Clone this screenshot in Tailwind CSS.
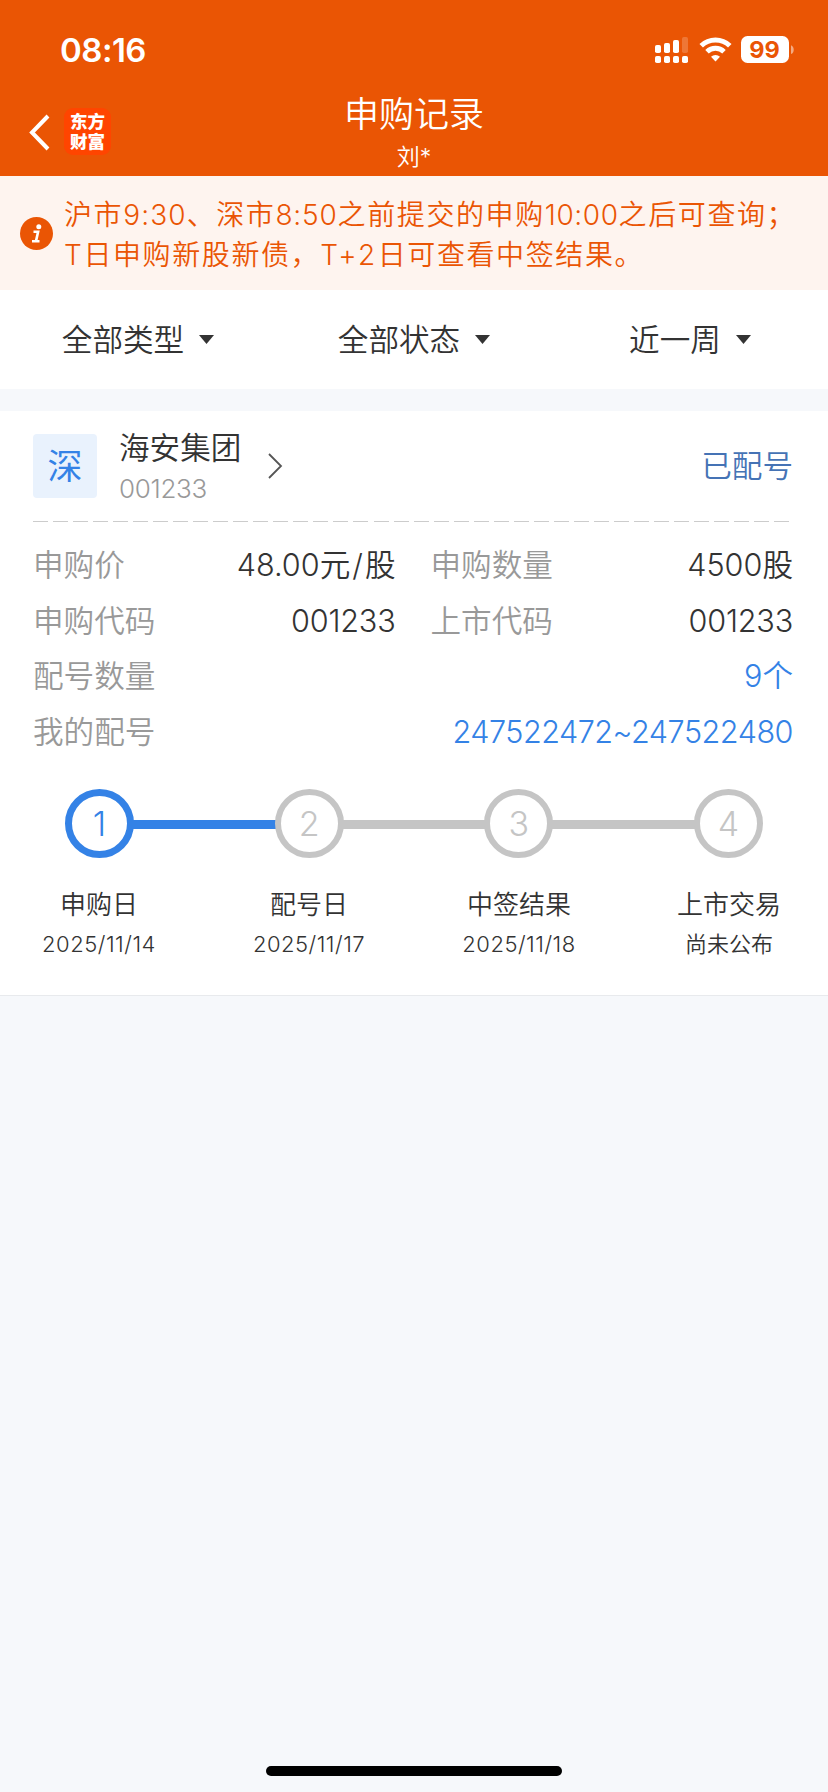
<!DOCTYPE html>
<html lang="zh-CN">
<head>
  <meta charset="UTF-8">
  <meta name="viewport" content="width=device-width, initial-scale=1.0">
  <title>申购记录</title>
  <script src="https://cdn.jsdelivr.net/npm/@tailwindcss/browser@4"></script>
</head>
<body class="bg-[#f6f8fb] font-['Inter','Noto_Sans_CJK_SC',sans-serif] text-[#333] font-[350]">
  <div class="w-[828px] h-[1792px] flex flex-col overflow-hidden">

    <!-- Header -->
    <header class="h-[176px] shrink-0 bg-[#ea5504] text-white">
      <div class="h-[98px] pl-[60px] pr-[34px] flex items-center justify-between">
        <span class="text-[33px] leading-[40px] font-semibold tracking-[-0.5px] pt-[2px]">08:16</span>
        <svg class="w-[140px] h-[30px]" viewBox="0 0 140 30" fill="#fff">
          <rect x="1" y="11" width="6" height="8" rx="1.8"/>
          <rect x="10" y="9" width="6" height="10" rx="1.8"/>
          <rect x="19" y="6" width="6" height="13" rx="1.8"/>
          <rect x="28" y="3" width="6" height="16" rx="1.8" opacity=".2"/>
          <rect x="1" y="22" width="6" height="7" rx="1.8"/>
          <rect x="10" y="22" width="6" height="7" rx="1.8"/>
          <rect x="19" y="22" width="6" height="7" rx="1.8"/>
          <rect x="28" y="22" width="6" height="7" rx="1.8"/>
          <g fill="none" stroke="#fff" stroke-width="5">
            <path d="M47.200 11.800a20.500 20.500 0 0 1 28.600 0"/>
            <path d="M53 17.700a12.200 12.200 0 0 1 17 0"/>
          </g>
          <path d="M57 22.800a6.500 6.500 0 0 1 9 0L61.500 27.500z"/>
          <rect x="87" y="2" width="48" height="27" rx="6.5"/>
          <path d="M137 11.300c3.600 1.200 3.600 7.600 0 8.800z" opacity=".5"/>
          <text x="110.500" y="24" text-anchor="middle" font-family="Inter" font-size="23.500" font-weight="700" fill="#ea5504">99</text>
        </svg>
      </div>
      <div class="h-[78px] grid grid-cols-[1fr_auto_1fr]">
        <div class="flex items-start pl-[28px] pt-[10px]">
          <svg class="w-[22px] h-[47px] mr-[14px]" viewBox="0 0 22 47" fill="none" stroke="#fff" stroke-width="4">
            <path d="M20 8L4 24.500L20 41"/>
          </svg>
          <div class="w-[47px] h-[47px] rounded-[9px] bg-[#ff4500] pt-[4px] text-center text-[17.5px] leading-[20px] font-black">东方<br>财富</div>
        </div>
        <div class="text-center -mt-[2px]">
          <h1 class="text-[35px] leading-[36px] font-[350]">申购记录</h1>
          <p class="text-[23px] leading-[28px] pt-[11px]">刘*</p>
        </div>
      </div>
    </header>

    <!-- Notice -->
    <section class="h-[114px] shrink-0 bg-[#fef4ef] text-[#ea5504] flex">
      <svg class="w-[33px] h-[33px] ml-[20px] mt-[41px] mr-[11px]" viewBox="0 0 33 33">
        <circle cx="16.500" cy="16.500" r="16.500" fill="#ea5504"/>
        <circle cx="18.800" cy="9.800" r="2.500" fill="#fff"/>
        <path d="M13.500 14.800h4.600l-2 8.800M12 24.200h7.500" fill="none" stroke="#fff" stroke-width="2.600"/>
      </svg>
      <p class="pt-[19px] text-[28px] leading-[40px] tracking-[1.6px] whitespace-nowrap">沪市<span class="tracking-[1.1px]">9:30</span>、深市<span class="tracking-[0.8px]">8:50</span>之前提交的申购<span class="tracking-[0.6px]">10:00</span>之后可查询；<br>T日申购新股新债，<span class="tracking-[2.4px]">T+2</span>日可查看中签结果。</p>
    </section>

    <!-- Filters -->
    <nav class="h-[99px] shrink-0 bg-white flex items-center text-[30.6px] leading-[40px]">
      <div class="flex-1 flex items-center justify-center gap-[15px]">
        <span>全部类型</span>
        <svg class="w-[15px] h-[9px]" viewBox="0 0 15 9" fill="#333"><path d="M0 0h15L7.500 9z"/></svg>
      </div>
      <div class="flex-1 flex items-center justify-center gap-[15px]">
        <span>全部状态</span>
        <svg class="w-[15px] h-[9px]" viewBox="0 0 15 9" fill="#333"><path d="M0 0h15L7.500 9z"/></svg>
      </div>
      <div class="flex-1 flex items-center justify-center gap-[15px]">
        <span>近一周</span>
        <svg class="w-[15px] h-[9px]" viewBox="0 0 15 9" fill="#333"><path d="M0 0h15L7.500 9z"/></svg>
      </div>
    </nav>

    <!-- Record -->
    <section class="h-[585px] mt-[22px] shrink-0 bg-white border-b border-[#e8eaed]">
      <div class="h-[110px] ml-[33px] mr-[35px] flex items-center">
        <div class="w-[64px] h-[64px] rounded-[4px] bg-[#e9f2fd] text-[#3482e6] text-[35px] leading-[64px] text-center font-normal">深</div>
        <div class="ml-[22px] pt-[4px]">
          <div class="text-[30.6px] leading-[40px]">海安集团</div>
          <div class="text-[26px] leading-[41px] tracking-[-0.3px] text-[#999]">001233</div>
        </div>
        <svg class="w-[16px] h-[26px] ml-[26px]" viewBox="0 0 16 26" fill="none" stroke="#555" stroke-width="1.8">
          <path d="M2 1L14 13L2 25"/>
        </svg>
        <span class="ml-auto text-[30.6px] leading-[40px] text-[#4573b5]">已配号</span>
      </div>
      <div class="h-px ml-[33px] w-[757px] bg-[repeating-linear-gradient(90deg,#ccc_0_15px,transparent_15px_20.03px)]"></div>

      <dl class="ml-[33px] mr-[35px] pt-[15px] grid grid-cols-2 gap-x-[35px] text-[30.6px] leading-[55.6px]">
        <div class="flex justify-between"><dt class="text-[#999]">申购价</dt><dd>48.00元<span class="mx-[2px]">/</span>股</dd></div>
        <div class="flex justify-between"><dt class="text-[#999]">申购数量</dt><dd>4500股</dd></div>
        <div class="flex justify-between"><dt class="text-[#999]">申购代码</dt><dd class="tracking-[-0.2px]">001233</dd></div>
        <div class="flex justify-between"><dt class="text-[#999]">上市代码</dt><dd class="tracking-[-0.2px]">001233</dd></div>
        <div class="col-span-2 flex justify-between"><dt class="text-[#999]">配号数量</dt><dd class="text-[#3482e6]">9个</dd></div>
        <div class="col-span-2 flex justify-between"><dt class="text-[#999]">我的配号</dt><dd class="text-[#3482e6] tracking-[-0.5px]">247522472~247522480</dd></div>
      </dl>

      <!-- Steps -->
      <div class="mt-[30px] px-[65px] flex items-center text-[34px] font-light text-[#c5c5c5]">
        <div class="w-[69px] h-[69px] shrink-0 rounded-full border-[7px] border-[#3482e6] text-[#3482e6] leading-[56px] text-center">1</div>
        <div class="flex-1 h-[9px] -mx-px mt-[2px] bg-[#3482e6]"></div>
        <div class="w-[69px] h-[69px] shrink-0 rounded-full border-[6.5px] border-[#c5c5c5] leading-[57px] text-center">2</div>
        <div class="flex-1 h-[9px] -mx-px mt-[2px] bg-[#c5c5c5]"></div>
        <div class="w-[69px] h-[69px] shrink-0 rounded-full border-[6.5px] border-[#c5c5c5] leading-[57px] text-center">3</div>
        <div class="flex-1 h-[9px] -mx-px mt-[2px] bg-[#c5c5c5]"></div>
        <div class="w-[69px] h-[69px] shrink-0 rounded-full border-[6.5px] border-[#c5c5c5] leading-[57px] text-center">4</div>
      </div>
      <div class="mt-[27px] px-[29px] flex justify-between text-center text-[26px] leading-[40px]">
        <div class="w-[140px]">申购日<div class="text-[22px] leading-[38px] tracking-[0.5px]">2025/11/14</div></div>
        <div class="w-[140px]">配号日<div class="text-[22px] leading-[38px] tracking-[0.5px]">2025/11/17</div></div>
        <div class="w-[140px]">中签结果<div class="text-[22px] leading-[38px] tracking-[0.5px]">2025/11/18</div></div>
        <div class="w-[140px]">上市交易<div class="text-[22px] leading-[38px]">尚未公布</div></div>
      </div>
    </section>

    <!-- Home indicator -->
    <div class="mt-auto mb-[16px] mx-auto w-[296px] h-[10px] rounded-full bg-black"></div>
  </div>
</body>
</html>
